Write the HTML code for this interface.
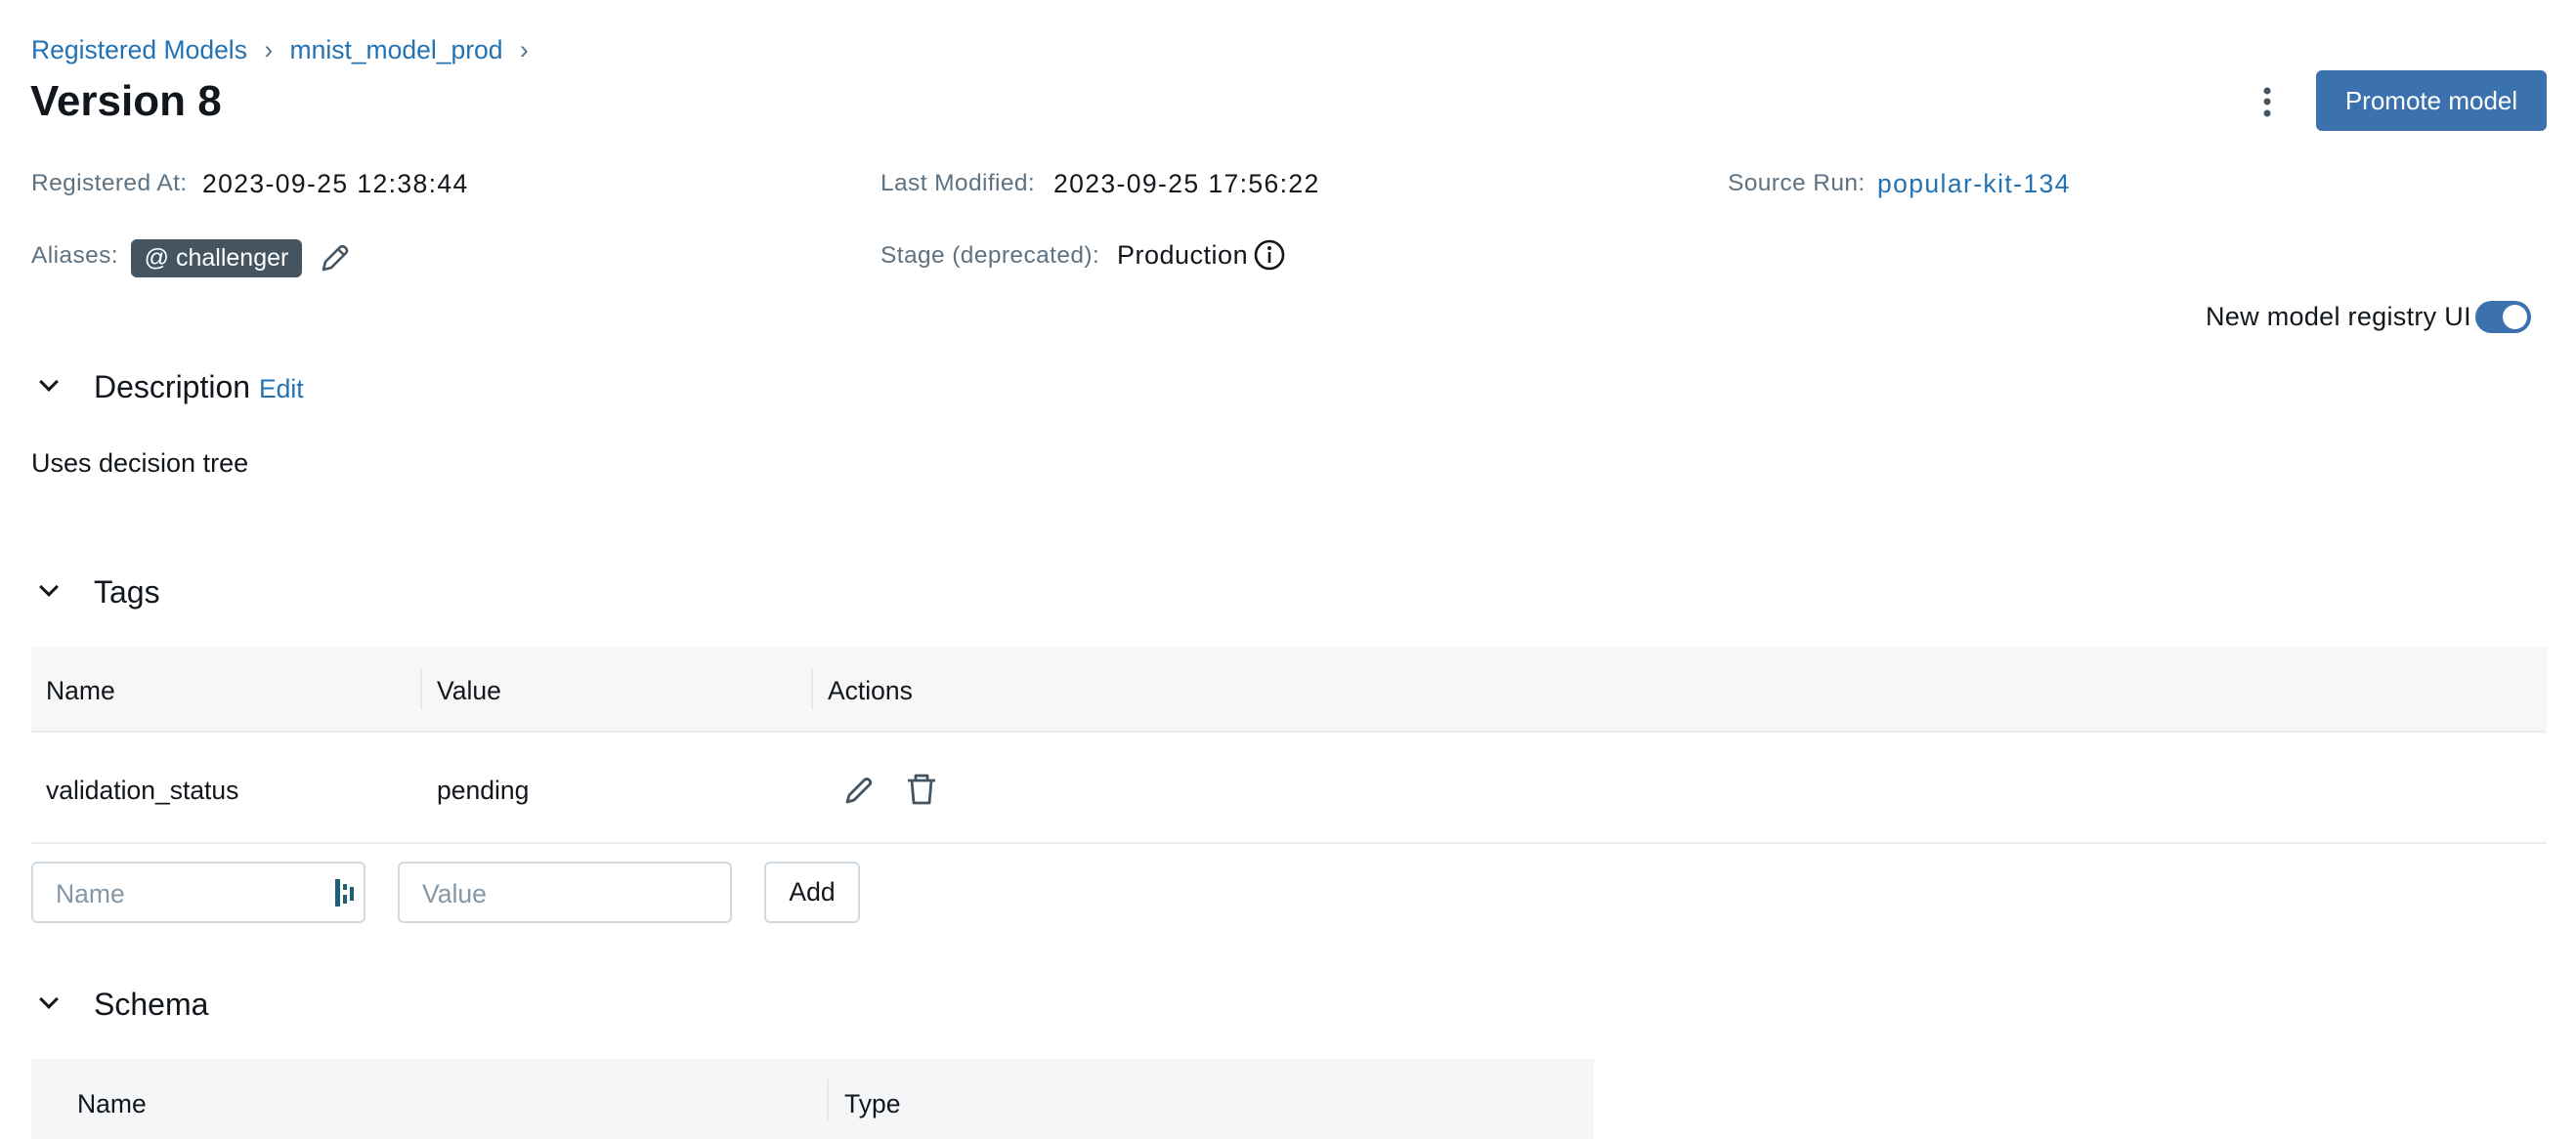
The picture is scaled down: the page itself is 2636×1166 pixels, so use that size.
<!DOCTYPE html>
<html><head><meta charset="utf-8"><style>
*{box-sizing:border-box;margin:0;padding:0}
body{width:2636px;height:1166px;overflow:hidden;background:#fff;font-family:"Liberation Sans",sans-serif;color:#11171c;font-size:26.5px;position:relative}
.a{position:absolute;white-space:nowrap;line-height:1}
.lbl{color:#5f7281;font-size:24.5px;letter-spacing:0.4px}
.val{font-size:26.5px;letter-spacing:1.4px}
.lnk{color:#2272b4}
.h2{font-size:32px}
.chev{position:absolute;width:14px;height:14px;border-right:3.5px solid #11171c;border-bottom:3.5px solid #11171c;transform:rotate(45deg)}
.inp{position:absolute;border:2px solid #d1d9e1;border-radius:6px;background:#fff}
</style></head><body>
<div class="a lnk" style="left:32px;top:38px;font-size:26.5px">Registered Models <span style="color:#5f7281;margin:0 10px">›</span> mnist_model_prod <span style="color:#5f7281;margin-left:10px">›</span></div>
<div class="a" style="left:31px;top:82px;font-size:44px;font-weight:bold">Version 8</div>
<svg class="a" style="left:2312px;top:88px" width="16" height="34"><circle cx="8" cy="5" r="3.5" fill="#445461"/><circle cx="8" cy="16" r="3.5" fill="#445461"/><circle cx="8" cy="28" r="3.5" fill="#445461"/></svg>
<div class="a" style="left:2370px;top:72px;width:236px;height:62px;background:#3a71ae;border-radius:6px;color:#fff;font-size:26px;display:flex;align-items:center;justify-content:center">Promote model</div>

<div class="a lbl" style="left:32px;top:176px">Registered At:</div>
<div class="a val" style="left:207px;top:175px">2023-09-25 12:38:44</div>
<div class="a lbl" style="left:901px;top:176px">Last Modified:</div>
<div class="a val" style="left:1078px;top:175px">2023-09-25 17:56:22</div>
<div class="a lbl" style="left:1768px;top:176px">Source Run:</div>
<div class="a lnk val" style="left:1921px;top:175px">popular-kit-134</div>

<div class="a lbl" style="left:32px;top:250px">Aliases:</div>
<div class="a" style="left:134px;top:245px;width:175px;height:39px;background:#445461;border-radius:6px;color:#fff;display:flex;align-items:center;justify-content:center;font-size:25px">@ challenger</div>
<svg class="a" style="left:325px;top:248px" width="34" height="34" viewBox="0 0 34 34"><path d="M6 28 L8 20 L23 5 Q26 3 29 6 Q31 9 29 11 L14 26 Z M21 7 L27 13" fill="none" stroke="#445461" stroke-width="2.6" stroke-linejoin="round"/></svg>
<div class="a lbl" style="left:901px;top:250px">Stage (deprecated):</div>
<div class="a" style="left:1143px;top:248px;font-size:27px;letter-spacing:0.5px">Production</div>
<svg class="a" style="left:1282px;top:244px" width="34" height="34"><circle cx="17" cy="17" r="14" fill="none" stroke="#11171c" stroke-width="2.6"/><circle cx="17" cy="10" r="2" fill="#11171c"/><rect x="15.7" y="14" width="2.6" height="11" fill="#11171c"/></svg>

<div class="a" style="left:2257px;top:311px;font-size:27px;letter-spacing:0.3px">New model registry UI</div>
<div class="a" style="left:2533px;top:308px;width:57px;height:33px;background:#3a71ae;border-radius:17px"><div style="position:absolute;right:4px;top:4px;width:25px;height:25px;border-radius:50%;background:#fff"></div></div>

<div class="chev" style="left:43px;top:384px"></div>
<div class="a h2" style="left:96px;top:380px">Description <span class="lnk" style="font-size:26.5px">Edit</span></div>
<div class="a" style="left:32px;top:461px;font-size:27px">Uses decision tree</div>

<div class="chev" style="left:43px;top:594px"></div>
<div class="a h2" style="left:96px;top:590px">Tags</div>

<div class="a" style="left:32px;top:662px;width:2574px;height:88px;background:#f7f7f7;border-bottom:2px solid #ebeef1"></div>
<div class="a" style="left:430px;top:684px;width:2px;height:42px;background:#e6e9ec"></div>
<div class="a" style="left:830px;top:684px;width:2px;height:42px;background:#e6e9ec"></div>
<div class="a" style="left:47px;top:694px">Name</div>
<div class="a" style="left:447px;top:694px">Value</div>
<div class="a" style="left:847px;top:694px">Actions</div>
<div class="a" style="left:32px;top:862px;width:2574px;height:2px;background:#ebeef1"></div>
<div class="a" style="left:47px;top:796px">validation_status</div>
<div class="a" style="left:447px;top:796px">pending</div>
<svg class="a" style="left:862px;top:792px" width="34" height="34" viewBox="0 0 34 34"><path d="M5 29 L7 22 L22 7 Q25 4 28 7 Q30 10 27 12 L12 27 Z" fill="none" stroke="#445461" stroke-width="2.8" stroke-linejoin="round"/></svg>
<svg class="a" style="left:926px;top:790px" width="34" height="36" viewBox="0 0 34 36"><path d="M3 9 H31 M11 9 V4 H23 V9 M7 9 L9 32 H25 L27 9" fill="none" stroke="#445461" stroke-width="2.8" stroke-linejoin="round"/></svg>

<div class="inp" style="left:32px;top:882px;width:342px;height:63px"></div>
<div class="a" style="left:57px;top:902px;color:#8596a5">Name</div>
<svg class="a" style="left:341px;top:899px" width="24" height="30"><rect x="2" y="1" width="5" height="28" fill="#1d6078"/><rect x="10" y="6" width="4" height="6" fill="#1d6078"/><rect x="10" y="17" width="4" height="9" fill="#1d6078"/><rect x="17" y="9" width="4" height="14" fill="#1d6078"/></svg>
<div class="inp" style="left:407px;top:882px;width:342px;height:63px"></div>
<div class="a" style="left:432px;top:902px;color:#8596a5">Value</div>
<div class="inp" style="left:782px;top:882px;width:98px;height:63px;display:flex;align-items:center;justify-content:center">Add</div>

<div class="chev" style="left:43px;top:1016px"></div>
<div class="a h2" style="left:96px;top:1012px">Schema</div>
<div class="a" style="left:32px;top:1084px;width:1599px;height:82px;background:#f5f6f7"></div>
<div class="a" style="left:846px;top:1105px;width:2px;height:42px;background:#e6e9ec"></div>
<div class="a" style="left:79px;top:1117px">Name</div>
<div class="a" style="left:864px;top:1117px">Type</div>
</body></html>
